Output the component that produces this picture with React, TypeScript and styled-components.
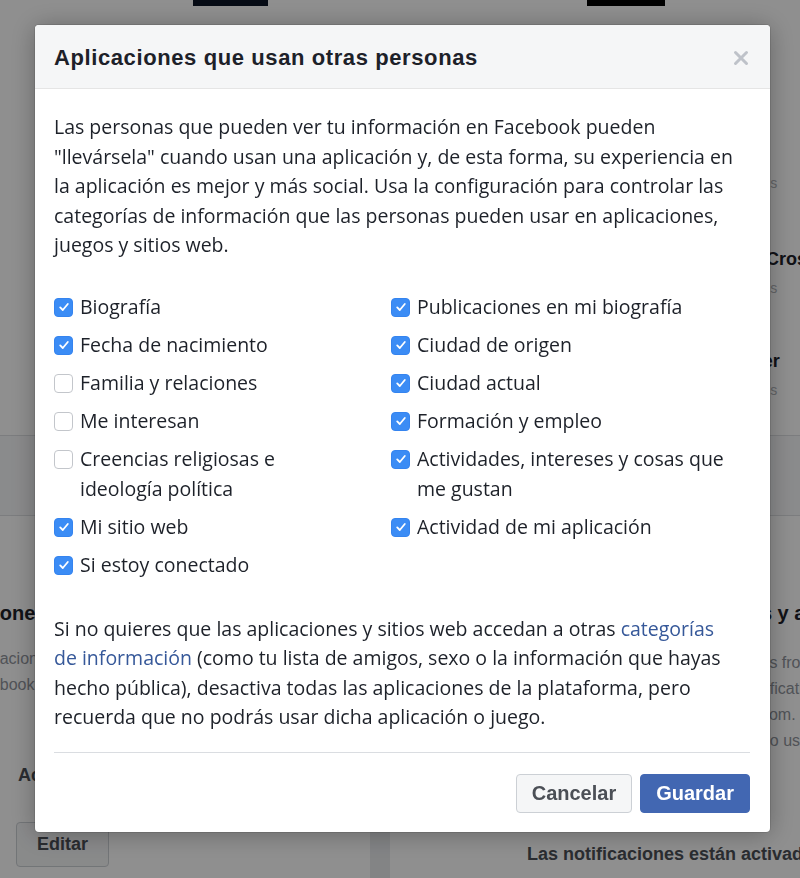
import React from "react";
import styled, { createGlobalStyle } from "styled-components";

const GlobalStyle = createGlobalStyle`
  html, body {
    margin: 0;
    padding: 0;
  }
  body {
    width: 800px;
    height: 878px;
    overflow: hidden;
    background: #e9ebee;
    font-family: "Liberation Sans", Arial, sans-serif;
  }
`;

const leftOptions = [
  { label: "Biografía", checked: true },
  { label: "Fecha de nacimiento", checked: true },
  { label: "Familia y relaciones", checked: false },
  { label: "Me interesan", checked: false },
  { label: "Creencias religiosas e ideología política", checked: false },
  { label: "Mi sitio web", checked: true },
  { label: "Si estoy conectado", checked: true },
];

const rightOptions = [
  { label: "Publicaciones en mi biografía", checked: true },
  { label: "Ciudad de origen", checked: true },
  { label: "Ciudad actual", checked: true },
  { label: "Formación y empleo", checked: true },
  { label: "Actividades, intereses y cosas que me gustan", checked: true },
  { label: "Actividad de mi aplicación", checked: true },
];

const Check = ({ checked }: { checked: boolean }) => (
  <Box $on={checked}>
    {checked && (
      <svg width="12" height="12" viewBox="0 0 12 12">
        <polyline
          points="2.2,6.4 4.8,9 9.8,3"
          fill="none"
          stroke="#fff"
          strokeWidth="1.8"
          strokeLinecap="round"
          strokeLinejoin="round"
        />
      </svg>
    )}
  </Box>
);

const App = () => {
  return (
    <>
      <GlobalStyle />
      <Page>
        <TopCard>
          <Strip>
            <Thumb $color="#0b1426" $left={193} $width={75} />
            <Thumb $color="#000" $left={319} $width={78} />
          </Strip>
          <AppList>
            <AppSub>Juegos</AppSub>
            <AppName $gap={51}>Crossy Road</AppName>
            <AppSub>Juegos</AppSub>
            <AppName $gap={48} $indent={-44}>Twitter</AppName>
            <AppSub>Juegos</AppSub>
          </AppList>
        </TopCard>
        <Band />
        <Cards>
          <LeftCard>
            <CardTitle $indent={-77} $gap={84}>Aplicaciones</CardTitle>
            <CardLine $indent={-35} $gap={20}>Aplicaciones y sitios web</CardLine>
            <CardLine $indent={-58}>en Facebook y otros sitios</CardLine>
            <CardState $indent={18} $gap={65}>Activado</CardState>
            <EditButton>Editar</EditButton>
          </LeftCard>
          <RightCard>
            <CardTitle $indent={312} $gap={84}>Juegos y aplicaciones</CardTitle>
            <CardLine $indent={310} $gap={24}>Solicitudes from</CardLine>
            <CardLine $indent={306}>Game notifications</CardLine>
            <CardLine $indent={274}>de Facebook.com.</CardLine>
            <CardLine $indent={306}>en juegos o usarlas</CardLine>
            <CardState $indent={137} $gap={88}>Las notificaciones están activadas</CardState>
          </RightCard>
        </Cards>
      </Page>

      <Overlay>
        <Modal>
          <Header>
            <Title>Aplicaciones que usan otras personas</Title>
            <Close aria-label="Cerrar">
              <svg width="16" height="16" viewBox="0 0 16 16">
                <path
                  d="M2.5 2.5 L13.5 13.5 M13.5 2.5 L2.5 13.5"
                  stroke="#bec2c9"
                  strokeWidth="3"
                  strokeLinecap="round"
                />
              </svg>
            </Close>
          </Header>
          <Body>
            <Text>
              Las personas que pueden ver tu información en Facebook pueden
              "llevársela" cuando usan una aplicación y, de esta forma, su
              experiencia en la aplicación es mejor y más social. Usa la
              configuración para controlar las categorías de información que
              las personas pueden usar en aplicaciones, juegos y sitios web.
            </Text>
            <Options>
              <Column $width={300}>
                {leftOptions.map((o) => (
                  <Option key={o.label}>
                    <Check checked={o.checked} />
                    <span>{o.label}</span>
                  </Option>
                ))}
              </Column>
              <Column $width={359}>
                {rightOptions.map((o) => (
                  <Option key={o.label}>
                    <Check checked={o.checked} />
                    <span>{o.label}</span>
                  </Option>
                ))}
              </Column>
            </Options>
            <Text $gap={34} $inset={14}>
              Si no quieres que las aplicaciones y sitios web accedan a otras{" "}
              <Link href="#">categorías de información</Link> (como tu lista de
              amigos, sexo o la información que hayas hecho pública), desactiva
              todas las aplicaciones de la plataforma, pero recuerda que no
              podrás usar dicha aplicación o juego.
            </Text>
            <Footer>
              <Button>Cancelar</Button>
              <Button $primary>Guardar</Button>
            </Footer>
          </Body>
        </Modal>
      </Overlay>
    </>
  );
};

export default App;

/* background page (dimmed by the overlay) */

const Page = styled.div`
  width: 800px;
  height: 878px;
  overflow: hidden;
`;

const TopCard = styled.div`
  height: 435px;
  background: #fff;
`;

const Strip = styled.div`
  display: flex;
  height: 6px;
`;

const Thumb = styled.div<{ $color: string; $left: number; $width: number }>`
  margin-left: ${(p) => p.$left}px;
  width: ${(p) => p.$width}px;
  background: ${(p) => p.$color};
`;

const AppList = styled.div`
  display: flex;
  flex-direction: column;
  padding: 161px 0 0 766px;
  white-space: nowrap;
`;

const AppSub = styled.div`
  font-size: 14px;
  line-height: 24px;
  color: #b0b3b8;
  margin: 4px 0 0 -34px;
`;

const AppName = styled.div<{ $gap: number; $indent?: number }>`
  font-size: 18px;
  font-weight: bold;
  line-height: 26px;
  color: #1d2129;
  margin-top: ${(p) => p.$gap}px;
  margin-left: ${(p) => p.$indent || 0}px;
`;

const Band = styled.div`
  height: 79px;
  background: #f7f8fa;
  border-top: 1px solid #dddfe2;
  border-bottom: 1px solid #dddfe2;
`;

const Cards = styled.div`
  display: flex;
  gap: 20px;
  height: 363px;
`;

const LeftCard = styled.div`
  width: 370px;
  flex: none;
  background: #fff;
  display: flex;
  flex-direction: column;
  align-items: flex-start;
  white-space: nowrap;
`;

const RightCard = styled(LeftCard)`
  width: 410px;
`;

const CardTitle = styled.div<{ $indent: number; $gap: number }>`
  font-size: 20px;
  font-weight: bold;
  line-height: 26px;
  color: #1d2129;
  margin: ${(p) => p.$gap}px 0 0 ${(p) => p.$indent}px;
`;

const CardLine = styled.div<{ $indent: number; $gap?: number }>`
  font-size: 16px;
  line-height: 26px;
  color: #90949c;
  margin: ${(p) => p.$gap || 0}px 0 0 ${(p) => p.$indent}px;
`;

const CardState = styled.div<{ $indent: number; $gap: number }>`
  font-size: 18px;
  font-weight: bold;
  line-height: 24px;
  color: #4b4f56;
  margin: ${(p) => p.$gap}px 0 0 ${(p) => p.$indent}px;
`;

const EditButton = styled.button`
  margin: 35px 0 0 16px;
  width: 93px;
  height: 45px;
  border: 1px solid #ccd0d5;
  border-radius: 4px;
  background: #f5f6f7;
  color: #4b4f56;
  font-family: "Liberation Sans", Arial, sans-serif;
  font-size: 18px;
  font-weight: bold;
`;

/* dialog */

const Overlay = styled.div`
  position: fixed;
  inset: 0;
  background: rgba(0, 0, 0, 0.44);
`;

const Modal = styled.div`
  width: 735px;
  margin: 25px 0 0 35px;
  background: #fff;
  border-radius: 4px;
  overflow: hidden;
  box-shadow: 0 2px 26px rgba(0, 0, 0, 0.3), 0 0 0 1px rgba(0, 0, 0, 0.1);
`;

const Header = styled.div`
  height: 64px;
  box-sizing: border-box;
  padding: 2px 21px 0 19px;
  display: flex;
  align-items: center;
  justify-content: space-between;
  background: #f5f6f7;
  border-bottom: 1px solid #e5e5e5;
`;

const Title = styled.h2`
  margin: 0;
  font-family: "Liberation Sans", Arial, sans-serif;
  font-size: 22px;
  letter-spacing: 0.6px;
  font-weight: bold;
  color: #1d2129;
`;

const Close = styled.button`
  padding: 0;
  border: 0;
  background: none;
  display: flex;
`;

const Body = styled.div`
  padding: 23px 20px 19px 19px;
  font-family: "Open Sans", sans-serif;
  font-size: 19.5px;
  color: #1d2129;
`;

const Text = styled.p<{ $gap?: number; $inset?: number }>`
  margin: ${(p) => p.$gap || 0}px 0 0;
  padding-right: ${(p) => p.$inset || 0}px;
  line-height: 29.5px;
`;

const Link = styled.a`
  color: #365899;
  text-decoration: none;
`;

const Options = styled.div`
  display: flex;
  gap: 37px;
  margin-top: 32px;
`;

const Column = styled.div<{ $width: number }>`
  width: ${(p) => p.$width}px;
  display: flex;
  flex-direction: column;
  gap: 8px;
`;

const Option = styled.label`
  display: flex;
  gap: 7px;
  line-height: 30px;
`;

const Box = styled.span<{ $on: boolean }>`
  flex: none;
  width: 19px;
  height: 19px;
  margin-top: 6px;
  box-sizing: border-box;
  border-radius: 4px;
  display: flex;
  align-items: center;
  justify-content: center;
  background: ${(p) => (p.$on ? "#3b8cf5" : "#fff")};
  border: 1px solid ${(p) => (p.$on ? "#3584ef" : "#c3c6cb")};
`;

const Footer = styled.div`
  margin-top: 20px;
  padding-top: 21px;
  border-top: 1px solid #dadde1;
  display: flex;
  justify-content: flex-end;
  gap: 8px;
`;

const Button = styled.button<{ $primary?: boolean }>`
  height: 39px;
  padding: 0 15px;
  border-radius: 4px;
  font-family: "Liberation Sans", Arial, sans-serif;
  font-size: 20px;
  font-weight: bold;
  border: 1px solid ${(p) => (p.$primary ? "#4267b2" : "#ccd0d5")};
  background: ${(p) => (p.$primary ? "#4267b2" : "#f5f6f7")};
  color: ${(p) => (p.$primary ? "#fff" : "#4b4f56")};
`;
